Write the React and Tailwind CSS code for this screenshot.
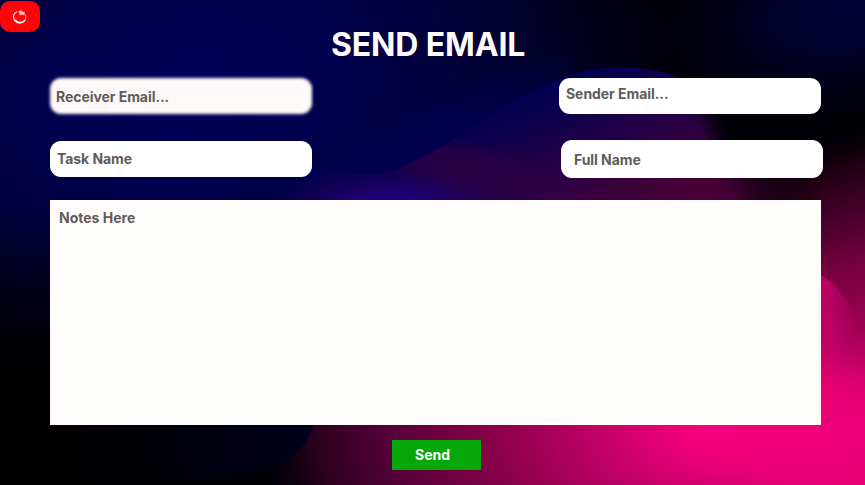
function Backdrop() {
  return (
    <svg className="absolute inset-0 -z-10 h-[485px] w-[865px]" viewBox="0 0 865 485" preserveAspectRatio="none" aria-hidden="true">
      <defs>
        <radialGradient id="navy" gradientUnits="userSpaceOnUse" cx="0" cy="0" r="1" gradientTransform="translate(190 90) rotate(-8) scale(490 320)">
          <stop offset="0" stopColor="#00005a" />
          <stop offset="0.3" stopColor="#00004e" />
          <stop offset="0.65" stopColor="#000030" />
          <stop offset="1" stopColor="#000008" />
        </radialGradient>
        <radialGradient id="trough" gradientUnits="userSpaceOnUse" cx="0" cy="0" r="1" gradientTransform="translate(410 152) rotate(-27) scale(210 48)">
          <stop offset="0" stopColor="#000052" />
          <stop offset="0.5" stopColor="#00004e" stopOpacity="0.7" />
          <stop offset="1" stopColor="#00004a" stopOpacity="0" />
        </radialGradient>
        <radialGradient id="corner" gradientUnits="userSpaceOnUse" cx="0" cy="0" r="1" gradientTransform="translate(855 5) rotate(-12) scale(220 120)">
          <stop offset="0" stopColor="#000038" />
          <stop offset="0.4" stopColor="#00002e" stopOpacity="0.85" />
          <stop offset="1" stopColor="#000018" stopOpacity="0" />
        </radialGradient>
        <radialGradient id="pink" gradientUnits="userSpaceOnUse" cx="0" cy="0" r="1" gradientTransform="translate(738 430) scale(480 265)">
          <stop offset="0" stopColor="#ff0084" />
          <stop offset="0.1" stopColor="#f5007c" />
          <stop offset="0.27" stopColor="#c8006a" />
          <stop offset="0.5" stopColor="#8c004c" />
          <stop offset="0.72" stopColor="#58003a" />
          <stop offset="0.88" stopColor="#2c001e" />
          <stop offset="1" stopColor="#12000c" stopOpacity="0" />
        </radialGradient>
        <radialGradient id="hot" gradientUnits="userSpaceOnUse" cx="0" cy="0" r="1" gradientTransform="translate(800 430) scale(115 85)">
          <stop offset="0" stopColor="#f6007c" stopOpacity="0.8" />
          <stop offset="0.5" stopColor="#ee0078" stopOpacity="0.65" />
          <stop offset="1" stopColor="#e40072" stopOpacity="0" />
        </radialGradient>
        <linearGradient id="wave" gradientUnits="userSpaceOnUse" x1="530" y1="84" x2="580" y2="210">
          <stop offset="0" stopColor="#000052" />
          <stop offset="0.2" stopColor="#08004e" />
          <stop offset="0.6" stopColor="#240046" />
          <stop offset="1" stopColor="#3e0040" />
        </linearGradient>
        <radialGradient id="violet" gradientUnits="userSpaceOnUse" cx="0" cy="0" r="1" gradientTransform="translate(395 215) scale(130 52)">
          <stop offset="0" stopColor="#240094" />
          <stop offset="0.4" stopColor="#220080" stopOpacity="0.8" />
          <stop offset="1" stopColor="#200050" stopOpacity="0" />
        </radialGradient>
        <radialGradient id="wine" gradientUnits="userSpaceOnUse" cx="0" cy="0" r="1" gradientTransform="translate(460 165) rotate(12) scale(120 28)">
          <stop offset="0" stopColor="#2e0042" stopOpacity="0.85" />
          <stop offset="0.5" stopColor="#2e0042" stopOpacity="0.6" />
          <stop offset="1" stopColor="#2e0042" stopOpacity="0" />
        </radialGradient>
        <radialGradient id="plum" gradientUnits="userSpaceOnUse" cx="0" cy="0" r="1" gradientTransform="translate(700 200) scale(120 60)">
          <stop offset="0" stopColor="#4c0036" />
          <stop offset="0.5" stopColor="#400034" stopOpacity="0.6" />
          <stop offset="1" stopColor="#300022" stopOpacity="0" />
        </radialGradient>
        <linearGradient id="column" gradientUnits="userSpaceOnUse" x1="775" y1="148" x2="865" y2="410">
          <stop offset="0" stopColor="#000000" stopOpacity="0" />
          <stop offset="0.15" stopColor="#200012" />
          <stop offset="0.3" stopColor="#44002a" />
          <stop offset="0.48" stopColor="#74003e" />
          <stop offset="0.72" stopColor="#a00054" />
          <stop offset="0.87" stopColor="#cc0068" />
          <stop offset="1" stopColor="#e80076" />
        </linearGradient>
        <linearGradient id="columnFade" gradientUnits="userSpaceOnUse" x1="740" y1="0" x2="822" y2="0">
          <stop offset="0" stopColor="#fff" stopOpacity="0" />
          <stop offset="1" stopColor="#fff" />
        </linearGradient>
        <mask id="columnMask" maskUnits="userSpaceOnUse" x="0" y="0" width="865" height="485"><rect width="865" height="485" fill="url(#columnFade)" /></mask>
        <linearGradient id="lobe" gradientUnits="userSpaceOnUse" x1="820" y1="280" x2="835" y2="420">
          <stop offset="0" stopColor="#b80066" />
          <stop offset="0.5" stopColor="#c2006a" />
          <stop offset="0.85" stopColor="#ea0078" stopOpacity="0.8" />
          <stop offset="1" stopColor="#f5007c" stopOpacity="0" />
        </linearGradient>
        <linearGradient id="lobeFade" gradientUnits="userSpaceOnUse" x1="828" y1="0" x2="862" y2="0">
          <stop offset="0" stopColor="#fff" />
          <stop offset="1" stopColor="#fff" stopOpacity="0" />
        </linearGradient>
        <mask id="lobeMask" maskUnits="userSpaceOnUse" x="0" y="0" width="865" height="485"><rect width="865" height="485" fill="url(#lobeFade)" /></mask>
        <linearGradient id="leftFoot" gradientUnits="userSpaceOnUse" x1="60" y1="470" x2="290" y2="410">
          <stop offset="0" stopColor="#000000" />
          <stop offset="0.45" stopColor="#00000c" />
          <stop offset="1" stopColor="#00001a" />
        </linearGradient>
        <linearGradient id="leftShade" x1="0" y1="0" x2="0" y2="1">
          <stop offset="0" stopColor="#000" stopOpacity="0" />
          <stop offset="0.5" stopColor="#000" stopOpacity="0.5" />
          <stop offset="1" stopColor="#000" />
        </linearGradient>
        <filter id="soft" x="-30%" y="-30%" width="160%" height="160%" colorInterpolationFilters="sRGB"><feGaussianBlur stdDeviation="9" /></filter>
        <filter id="edge" x="-10%" y="-10%" width="120%" height="120%" colorInterpolationFilters="sRGB"><feGaussianBlur stdDeviation="0.7" /></filter>
        <clipPath id="waveClip">
          <path d="M230 150 C285 150 320 174 365 174 C402 174 420 156 441 147 C475 125 500 106 530 92 C560 78 586 67 617 67 C648 67 670 73 690 81 L865 110 V230 H230 Z" />
        </clipPath>
      </defs>
      <rect width="865" height="485" fill="url(#navy)" />
      <rect width="865" height="485" fill="url(#trough)" />
      <rect width="865" height="485" fill="url(#corner)" />
      <rect y="210" width="60" height="190" fill="url(#leftShade)" />
      <g clipPath="url(#waveClip)">
        <path d="M310 0 H660 C692 80 704 110 712 132 Q726 175 770 260 H300 Z" fill="url(#wave)" filter="url(#soft)" />
        <rect x="250" y="60" width="450" height="145" fill="url(#violet)" />
        <rect x="330" y="120" width="260" height="85" fill="url(#wine)" />
        <rect x="570" y="120" width="295" height="110" fill="url(#plum)" />
      </g>
      <path d="M312 200 H821 V485 H180 V425 Z" fill="url(#pink)" />
      <path d="M821 425 H865 V485 H821 Z" fill="url(#pink)" />
      <rect x="740" y="100" width="125" height="385" fill="url(#column)" mask="url(#columnMask)" />
      <path d="M815 273 C834 280 842 292 850 308 Q862 335 865 400 V430 H815 Z" fill="url(#lobe)" mask="url(#lobeMask)" filter="url(#edge)" />
      <rect x="620" y="330" width="245" height="155" fill="url(#hot)" />
      <path d="M0 400 H50 V422 H314 C309 443 299 458 267 467 C245 474 220 475 195 478 L130 485 H0 Z" fill="url(#leftFoot)" />
    </svg>
  );
}

function TomatoIcon() {
  return (
    <svg className="h-4 w-4" viewBox="0 0 16 16" fill="none" aria-hidden="true">
      <path d="M4.6 3 C2.2 4.2 1.1 6.4 1.7 9 C2.3 11.8 4.2 13.6 7 13.9" stroke="#ffdede" strokeWidth="1.2" strokeLinecap="round" />
      <path d="M3.2 11 C5.6 14.4 10.8 14.6 13 11" stroke="#fff" strokeWidth="1.6" />
      <path d="M11.8 4.2 C14 5.6 14.5 8.3 13.2 11" stroke="#ffa5a5" strokeWidth="1" />
      <path d="M5.6 1.9 L8 2.2 L8.7 .6 L10 2.4 L13.1 2.9 L11.9 4.5 L12.6 6.5 L9.7 5.6 L7.8 6.4 L7.3 4.1 Z" fill="#ffb5b5" />
    </svg>
  );
}

const field = "rounded-[11px] bg-white text-sm leading-5 font-bold tracking-[-0.06px] text-[#5f5b5b] placeholder:text-[#5f5b5b] placeholder:opacity-100 outline-none";

export default function App() {
  return (
    <main className="relative isolate flex h-[485px] w-[865px] flex-col overflow-hidden bg-black font-['Inter',sans-serif]">
      <Backdrop />
      <header className="flex h-[78px] items-start">
        <button aria-label="Home" className="mt-px flex h-[31px] w-10 items-center justify-center rounded-[10px] bg-[#ff0508]">
          <TomatoIcon />
        </button>
        <h1 className="mt-[25px] ml-[291px] text-[32px] leading-10 font-bold tracking-[-0.15px] whitespace-nowrap text-[#fffbfb]">SEND EMAIL</h1>
      </header>
      <form className="flex flex-col pl-[50px]">
        <div className="flex h-[62px] items-start">
          <div className="relative isolate h-9 w-[262px]">
            <div className="absolute inset-0 -z-10 rounded-[11px] bg-[#fff8f8] blur-[1.5px]" />
            <input aria-label="Receiver email" placeholder="Receiver Email..." className="block h-9 w-full bg-transparent pl-1.5 text-sm leading-5 font-bold tracking-[-0.06px] outline-none placeholder:text-[#5f5b5b] placeholder:opacity-100" />
          </div>
          <input aria-label="Sender email" placeholder="Sender Email..." className={`${field} ml-[247px] h-9 w-[262px] pb-1.5 pl-[7px]`} />
        </div>
        <div className="flex h-[60px] items-start">
          <input aria-label="Task name" placeholder="Task Name" className={`${field} mt-px h-9 w-[262px] pb-0.5 pl-[7px]`} />
          <input aria-label="Full name" placeholder="Full Name" className={`${field} ml-[249px] h-[38px] w-[262px] pl-[13px]`} />
        </div>
        <textarea aria-label="Notes" placeholder="Notes Here" className="block h-[225px] w-[771px] resize-none bg-[#fffcfb] pt-2 pl-[9px] text-sm leading-5 font-bold outline-none placeholder:text-[#5f5b5b] placeholder:opacity-100" />
        <button type="button" className="mt-[15px] ml-[342px] h-[30px] w-[89px] bg-[#05a70b] pr-2 text-sm leading-5 font-bold text-white">Send</button>
      </form>
    </main>
  );
}
